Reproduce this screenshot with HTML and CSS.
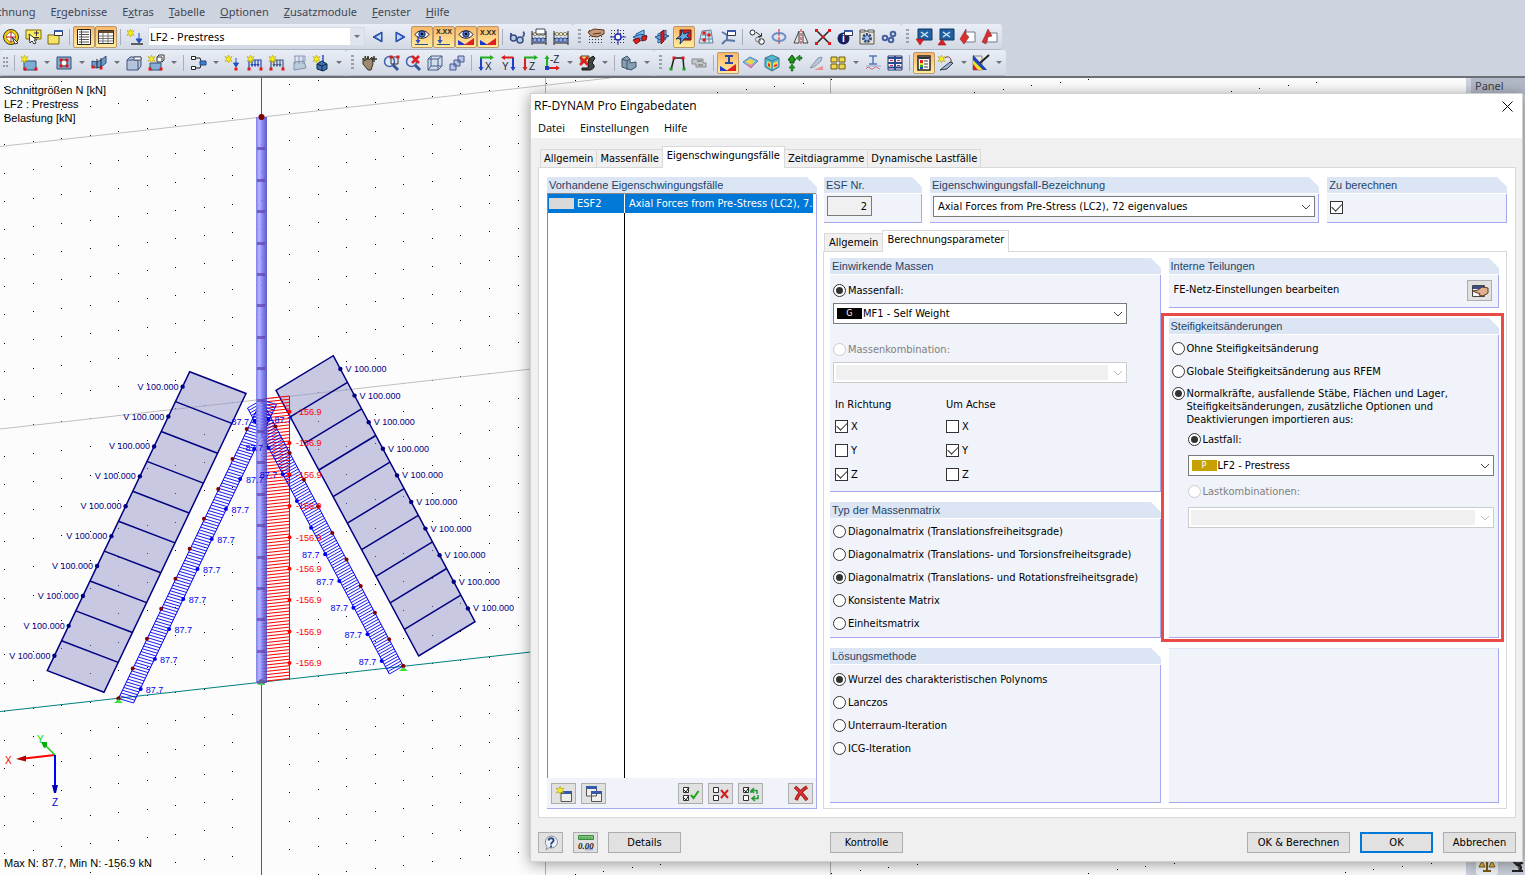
FILE: index.html
```html
<!DOCTYPE html>
<html lang="de">
<head>
<meta charset="utf-8">
<title>RF-DYNAM Pro Eingabedaten</title>
<link rel="stylesheet" href="styles.css">
</head>
<body>
<div class="app">
  <nav class="menubar">
    <a href="#" class="cut">echnung</a><a href="#">E<u>r</u>gebnisse</a><a href="#">E<u>x</u>tras</a><a href="#"><u>T</u>abelle</a><a href="#"><u>O</u>ptionen</a><a href="#"><u>Z</u>usatzmodule</a><a href="#"><u>F</u>enster</a><a href="#"><u>H</u>ilfe</a>
  </nav>
  <div class="toolbar" id="bar1"></div>
  <div class="toolbar" id="bar2"></div>
  <main class="work">
    <svg class="view" id="view" role="img" aria-label="Schnittgrößen N"></svg>
    <aside class="panel">
      <h2>Panel</h2>
      <div class="panel-foot">
        <button type="button" class="ptab on" aria-label="Faktoren"><svg class="ic" viewBox="0 0 16 16"><path d="M8 2v11M2 4h12M4 14h8" stroke="#7a5c14" stroke-width="2" fill="none"/><path d="M0 10l3-6 3 6zM10 10l3-6 3 6z" fill="#e8c040" stroke="#7a5c14"/></svg></button>
        <button type="button" class="ptab" aria-label="Filter"><svg class="ic" viewBox="0 0 16 16"><path d="M4 4l6-3 3 5-5 2zM3 14h11M8 8c5 0 5 4 2 6" stroke="#222" stroke-width="2" fill="#555"/></svg></button>
      </div>
    </aside>
  </main>
</div>

<section class="dialog" role="dialog" aria-labelledby="dlg-title">
  <header class="titlebar">
    <h1 id="dlg-title">RF-DYNAM Pro Eingabedaten</h1>
    <button type="button" class="close" aria-label="Schließen"><svg viewBox="0 0 11 11"><path d="M.5.5l10 10M10.500.5l-10 10" stroke="#000" fill="none"/></svg></button>
  </header>
  <nav class="dlgmenu"><a href="#">Datei</a><a href="#">Einstellungen</a><a href="#">Hilfe</a></nav>

  <div class="dlgbody">
    <div class="tabs" role="tablist">
      <button type="button" role="tab">Allgemein</button><button type="button" role="tab">Massenfälle</button><button type="button" role="tab" class="on" aria-selected="true">Eigenschwingungsfälle</button><button type="button" role="tab">Zeitdiagramme</button><button type="button" role="tab">Dynamische Lastfälle</button>
    </div>
    <div class="page outer">
      <section class="group listgroup">
        <h3>Vorhandene Eigenschwingungsfälle</h3>
        <table class="cases">
          <tbody>
            <tr class="sel"><td><i class="swatch"></i>ESF2</td><td>Axial Forces from Pre-Stress (LC2), 7.</td></tr>
            <tr class="rest"><td></td><td></td></tr>
          </tbody>
        </table>
        <div class="listbar">
          <button type="button" class="btn sq" aria-label="Neu"><svg class="ic" viewBox="0 0 16 16"><path d="M5 6h10.500v9.500H5z" fill="#f0f0ea" stroke="#555"/><path d="M5 5h11v3H5z" fill="#3858a8"/><path d="M4 0l1 3 3-1-2 2.500 2 2.500-3-1-1 2-1-2-3 1 2-2.500L0 2l3 1z" fill="#f6ee20" stroke="#a89400" stroke-width=".5"/></svg></button>
          <button type="button" class="btn sq" aria-label="Kopieren"><svg class="ic" viewBox="0 0 16 16"><path d="M.500 1h10v9H.500zM5.500 6h10v9.500h-10z" fill="#f0f0ea" stroke="#555"/><path d="M0 0h11v3H0zM5 5h11v3H5z" fill="#3858a8"/></svg></button>
          <span class="grow"></span>
          <button type="button" class="btn sq" aria-label="Alle auswählen"><svg class="ic" viewBox="0 0 16 16"><path d="M.500 1.500h5v5h-5zM.500 9.500h5v5h-5z" fill="#fff" stroke="#333"/><path d="M1 4l2 2 3-5M1 12l2 2 3-5" stroke="#222" fill="none"/><path d="M8 9l2.500 3L15.500 5" stroke="#1da51d" stroke-width="2" fill="none"/></svg></button>
          <button type="button" class="btn sq" aria-label="Alle abwählen"><svg class="ic" viewBox="0 0 16 16"><path d="M.500 1.500h5v5h-5zM.500 9.500h5v5h-5z" fill="#fff" stroke="#333"/><path d="M8 4l7 8M15 4l-7 8" stroke="#d02020" stroke-width="2" fill="none"/></svg></button>
          <button type="button" class="btn sq" aria-label="Auswahl umkehren"><svg class="ic" viewBox="0 0 16 16"><path d="M.500 1.500h5v5h-5zM.500 9.500h5v5h-5z" fill="#fff" stroke="#333"/><path d="M1 4l2 2 3-5" stroke="#222" fill="none"/><path d="M8 7V4.500h6V8M15 9v3.500H9M11 2L8.500 4.500 11 7M12 10l-3 2.500 3 2.500" stroke="#1d9a35" stroke-width="1.500" fill="none"/></svg></button>
          <span class="pad"></span>
          <button type="button" class="btn sq" aria-label="Löschen"><svg class="ic" viewBox="0 0 16 16"><path d="M2 1c5 4 8 8 12 13M14 1C9 4 5 9 3 14" stroke="#8c1010" stroke-width="3.500" fill="none"/><path d="M2 1c5 4 8 8 12 13M14 1C9 4 5 9 3 14" stroke="#e03030" stroke-width="2" fill="none"/></svg></button>
        </div>
      </section>

      <div class="detail">
        <div class="toprow">
          <section class="group"><h3><label for="esf">ESF Nr.</label></h3><div class="gb"><input id="esf" class="num" type="text" value="2" readonly></div></section>
          <section class="group"><h3><label for="bez">Eigenschwingungsfall-Bezeichnung</label></h3><div class="gb bez"><div class="combo"><select id="bez"><option>Axial Forces from Pre-Stress (LC2), 72 eigenvalues</option></select><svg class="chev" viewBox="0 0 10 6"><path d="M1 1l4 4 4-4" fill="none" stroke="#444"/></svg></div></div></section>
          <section class="group"><h3><label for="calc">Zu berechnen</label></h3><div class="gb calc"><input type="checkbox" id="calc" checked></div></section>
        </div>

        <div class="tabs inner" role="tablist">
          <button type="button" role="tab">Allgemein</button><button type="button" role="tab" class="on" aria-selected="true">Berechnungsparameter</button>
        </div>
        <div class="page params">
          <div class="stack">
            <section class="group">
              <h3>Einwirkende Massen</h3>
              <div class="gb masses">
                <label class="opt"><input type="radio" name="mass" checked>Massenfall:</label>
                <div class="combo"><span class="badge g">G</span><select aria-label="Massenfall"><option>MF1 - Self Weight</option></select><svg class="chev" viewBox="0 0 10 6"><path d="M1 1l4 4 4-4" fill="none" stroke="#444"/></svg></div>
                <label class="opt off mk"><input type="radio" name="mass" disabled>Massenkombination:</label>
                <div class="combo off"><select aria-label="Massenkombination" disabled></select><svg class="chev" viewBox="0 0 10 6"><path d="M1 1l4 4 4-4" fill="none" stroke="#bbb"/></svg></div>
                <div class="axes">
                  <fieldset><legend>In Richtung</legend>
                    <label><input type="checkbox" checked>X</label><label><input type="checkbox">Y</label><label><input type="checkbox" checked>Z</label>
                  </fieldset>
                  <fieldset><legend>Um Achse</legend>
                    <label><input type="checkbox">X</label><label><input type="checkbox" checked>Y</label><label><input type="checkbox">Z</label>
                  </fieldset>
                </div>
              </div>
            </section>
            <section class="group">
              <h3>Typ der Massenmatrix</h3>
              <div class="gb matrix">
                <label class="opt"><input type="radio" name="mx">Diagonalmatrix (Translationsfreiheitsgrade)</label>
                <label class="opt"><input type="radio" name="mx">Diagonalmatrix (Translations- und Torsionsfreiheitsgrade)</label>
                <label class="opt"><input type="radio" name="mx" checked>Diagonalmatrix (Translations- und Rotationsfreiheitsgrade)</label>
                <label class="opt"><input type="radio" name="mx">Konsistente Matrix</label>
                <label class="opt"><input type="radio" name="mx">Einheitsmatrix</label>
              </div>
            </section>
          </div>
          <div class="stack">
            <section class="group">
              <h3>Interne Teilungen</h3>
              <div class="gb mesh"><span>FE-Netz-Einstellungen bearbeiten</span>
                <button type="button" class="btn sq" aria-label="FE-Netz-Einstellungen bearbeiten"><svg class="ic" viewBox="0 0 16 16"><path d="M.500 2.500h12v11H.500z" fill="#fafafa" stroke="#444"/><path d="M1 3h12v3H1z" fill="#35508c"/><path d="M1 8l5-1 4-3 6 1v5l-5 3-4-1 1-1.500-4-1z" fill="#e0b090" stroke="#5a3820"/></svg></button></div>
            </section>
            <section class="group fill marked">
              <h3>Steifigkeitsänderungen</h3>
              <div class="gb stiff">
                <label class="opt"><input type="radio" name="st">Ohne Steifigkeitsänderung</label>
                <label class="opt"><input type="radio" name="st">Globale Steifigkeitsänderung aus RFEM</label>
                <label class="opt multi"><input type="radio" name="st" checked><span>Normalkräfte, ausfallende Stäbe, Flächen und Lager,<br>Steifigkeitsänderungen, zusätzliche Optionen und<br>Deaktivierungen importieren aus:</span></label>
                <div class="sub">
                  <label class="opt"><input type="radio" name="lf" checked>Lastfall:</label>
                  <div class="combo"><span class="badge p">P</span><select aria-label="Lastfall"><option>LF2 - Prestress</option></select><svg class="chev" viewBox="0 0 10 6"><path d="M1 1l4 4 4-4" fill="none" stroke="#444"/></svg></div>
                  <label class="opt off"><input type="radio" name="lf" disabled>Lastkombinationen:</label>
                  <div class="combo off"><select aria-label="Lastkombinationen" disabled></select><svg class="chev" viewBox="0 0 10 6"><path d="M1 1l4 4 4-4" fill="none" stroke="#bbb"/></svg></div>
                </div>
              </div>
            </section>
          </div>
          <section class="group">
            <h3>Lösungsmethode</h3>
            <div class="gb method">
              <label class="opt"><input type="radio" name="lm" checked>Wurzel des charakteristischen Polynoms</label>
              <label class="opt"><input type="radio" name="lm">Lanczos</label>
              <label class="opt"><input type="radio" name="lm">Unterraum-Iteration</label>
              <label class="opt"><input type="radio" name="lm">ICG-Iteration</label>
            </div>
          </section>
          <section class="group blank"></section>
        </div>
      </div>
    </div>
  </div>

  <footer class="dlgfoot">
    <button type="button" class="btn sq" aria-label="Hilfe"><svg class="ic" viewBox="0 0 16 16"><path d="M8 1a6.500 6 0 1 1-2 11.700L3 15l1-3.500A6.200 6.200 0 0 1 8 1z" fill="#eef2fa" stroke="#8890a0"/><path d="M5.500 5.500C6 2.500 10.500 2.500 10.500 5.500 10.500 7.500 8 7 8 9.500M8 10.500v2" stroke="#30487c" stroke-width="2" fill="none"/></svg></button>
    <button type="button" class="btn sq units" aria-label="Einheiten"><svg class="ic" viewBox="0 0 16 16"><path d="M.500.500h15v4H.500z" fill="#7cc47c" stroke="#3c8c3c"/><path d="M3 2v3M6 2v3M9 2v3M12 2v3" stroke="#3c8c3c"/><path d="M7 13h8v2.500H7z" fill="#a8b8d8"/><text x="0" y="14" font-size="9" font-style="italic" font-weight="bold" font-family="Liberation Serif, serif" fill="#222">0.00</text></svg></button>
    <button type="button" class="btn">Details</button>
    <button type="button" class="btn kontrolle">Kontrolle</button>
    <span class="grow"></span>
    <button type="button" class="btn wide">OK &amp; Berechnen</button>
    <button type="button" class="btn primary">OK</button>
    <button type="button" class="btn">Abbrechen</button>
  </footer>
</section>
<script src="app.js"></script>
</body>
</html>
```
FILE: app.js
```javascript
/* ---------- toolbar icons ---------- */
const P = (d, f = 'none', s = 'none', w = 1) => `<path d="${d}" fill="${f}" stroke="${s}" stroke-width="${w}"/>`;
const T = (x, y, t, c = '#111', s = 8) => `<text x="${x}" y="${y}" font-size="${s}" font-weight="bold" font-family="Liberation Sans, sans-serif" fill="${c}">${t}</text>`;
const star = P('M3.500 0l1 2.500L7 1.500 5.500 4 7 6.500l-2.500-1-1 2.500-1-2.500-2.500 1L1.500 4 0 1.500l2.500 1z', '#f6ee20', '#a89400', .5);
const dot = (x, y, c = '#e01818') => P(`M${x - 1.500} ${y - 1.500}h3v3h-3z`, c);
const lens = P('M10 10l5 5', 'none', '#38549c', 3) + '<circle cx="6.500" cy="6.500" r="5" fill="#dce8fa" stroke="#4060a8" stroke-width="1.500"/>';
const eye = P('M1 5.500c3-5 11-5 14 0-3 5-11 5-14 0z', '#fff', '#222') + '<circle cx="8" cy="5" r="3.200" fill="#4c78d0" stroke="#142860"/><circle cx="8" cy="5" r="1.300" fill="#000"/>';
const ramp = P('M0 16v-5l8 5z', '#2038d0') + P('M16 9v7H6z', '#e02020');
const cube = (c = '#a8c0e0') => P('M1 5l3-3h11v9l-3 4H1z', c, '#3c5484') + P('M1 5h11v10M12 5l3-3', 'none', '#3c5484');
const load = P('M2 15V5h12v10M5 5v6M8 5v6M11 5v6M4 9l1 2 1-2M7 9l1 2 1-2M10 9l1 2 1-2', 'none', '#2848b0', 1.2) + dot(2, 14) + dot(14, 14);
const grid = P('M1 1.500h15M1 4.500h15M1 7.500h15M1 10.500h15M1 13.500h15', 'none', '#333').replace('/>', ' stroke-dasharray="1 2"/>');
const planes = P('M4 5l8-4v9l-8 4z', '#8cc8f0', '#185898') + P('M1 8l8-3 6 2-9 4z', '#68a8e0', '#185898');
const beads = P('M1 2v14M15 2v14M1 5h14M1 9.500h14M1 14h14', 'none', '#222') + [4, 8, 12].map(x => `<circle cx="${x}" cy="5" r="1.700" fill="#f0e8a0" stroke="#555" stroke-width=".6"/><circle cx="${x}" cy="11" r="2.200" fill="#90a8e0" stroke="#283c80" stroke-width=".8"/>`).join('');
const win = P('M7.500 1.500h8v5h-8z', '#fff', '#334') + P('M7 1h9v2H7z', '#3858a8');
const blocks = c => P('M1 2h6v5H1zM9 2h6v5H9zM1 9h6v5H1zM9 9h6v5H9z', c, '#6a5a10');
const screen = P('M2 0h14v11H2z', '#2060a0', '#103868') + P('M5 3l7 5M12 3L5 8', 'none', '#d0e4f8', 1.5);
const axes = (x1, c1, x2, c2, l) => P(`M${x1} 15V2`, 'none', c1, 2) + P('M2 2.500h12', 'none', c2, 2) + P(`M${x1 - 2.500} 12h5l-2.500 4z`, c1) + P(x2, c2) + `<text x="7" y="15" font-size="10" font-family="Liberation Sans, sans-serif" fill="#223">${l}</text>`;
const I = {
  target: '<circle cx="8" cy="8" r="6" fill="#fff" stroke="#f0d000" stroke-width="3"/><circle cx="8" cy="8" r="7.500" fill="none" stroke="#333"/><circle cx="8" cy="8" r="4.500" fill="none" stroke="#666" stroke-width=".7"/>' + P('M8 2v12M3 8h10', 'none', '#d02020', 1) + P('M9 8l6 6-3 1z', '#fff', '#333'),
  pick: P('M1 1h15v9H1z', '#f8ec60', '#806c00') + P('M4 5l1 9 2-2 2 3 2-1-2-3h3z', '#fff', '#333') + P('M9 4h5M11.500 2v5M9 8.500h5', 'none', '#333'),
  folder: P('M1 6h11v9H1z', '#f4e468', '#7c6c10') + win,
  list: P('M1.500.500h13v15h-13z', '#fff', '#222') + P('M3 3h10M3 5.500h10M3 8h10M3 10.500h10M3 13h10M5.500 1v14', 'none', '#555'),
  table: P('M.500 1.500h15v13H.500z', '#fff', '#333') + P('M1 2h14v2H1z', '#6a4a28') + P('M1 7h14M1 9.500h14M1 12h14M5 4v10M10 4v10', 'none', '#777'),
  newload: star + P('M4 15h12', 'none', '#333', 1.5) + P('M12 4v8M12 14l-3-4h6z', '#2850c0', '#2850c0', 1),
  prev: P('M12 3v10L3 8z', '#3868d8', '#1c3c98') + P('M11 5v6L6 8z', '#c8dcff'), next: P('M4 3v10l9-5z', '#3868d8', '#1c3c98') + P('M5 5v6l5-3z', '#c8dcff'),
  eyeload: eye + P('M4 7v5', 'none', '#2850c0', 1.5) + P('M1.500 11l2.500 4 2.500-4z', '#2850c0') + P('M1 15.500h13', 'none', '#2c4c90'), xxload: T(0, 5, 'X.XX', '#222', 7) + P('M4 7v5', 'none', '#2850c0', 1.5) + P('M1.500 11l2.500 4 2.500-4z', '#2850c0') + P('M1 15.500h13', 'none', '#2c4c90'),
  eyeramp: eye + ramp, xxramp: T(0, 6, 'X.XX', '#222', 7) + ramp,
  glasses: P('M2 4v4M14 3c2 1 1 3 0 5', 'none', '#445c98', 2) + '<circle cx="4.500" cy="9" r="3" fill="#b8cce8" stroke="#384c80" stroke-width="1.500"/><circle cx="11" cy="11" r="3" fill="#b8cce8" stroke="#384c80" stroke-width="1.500"/>',
  abacusw: beads + P('M5 0h9v5H5z', '#fff', '#445'), abacus: beads,
  handgrid: grid + P('M0 3l6-3 10 1v4L9 8 3 7z', '#c89878', '#5a3820') + P('M5 5l8-1', 'none', '#5a3820'), gridpt: grid + '<circle cx="8" cy="8" r="3" fill="#fff" stroke="#2030b0" stroke-width="1.500"/>' + P('M8 0v5M8 11v5M0 8h5M11 8h5', 'none', '#2030b0'),
  plane1: planes + P('M1 11l6-2 1 3-4 3z', '#e02020', '#801010') + P('M10 7h5l-1 4-4 1z', '#e02020', '#801010'), plane2: planes + P('M7 3l3-2v11l-3 3z', '#e02020', '#801010'), plane3: P('M4 1h11v10H4z', '#e02020', '#601010') + P('M6 1l2 4 5-2-2 4 3 3-5-1-5 6 1-6-5 1 5-4z', '#68a8e0', '#103868'),
  meshpt: P('M4 2l9-1 2 13H1zM4 6h10M2 10h12M8 2L7 14M11 2v12', '#d4ecf8', '#68809c') + dot(6, 4) + dot(11, 6) + dot(6, 11), linkwin: P('M2 3l5 3v5l8 1M2 15l4-4', 'none', '#5878a8', 2) + win,
  circlecopy: '<circle cx="3.500" cy="3.500" r="2.500" fill="#fff" stroke="#222"/><circle cx="12.500" cy="12.500" r="2.800" fill="#fff" stroke="#222"/><circle cx="9" cy="10.500" r="2.500" fill="none" stroke="#777"/>' + P('M7 3l5 4M12.500 4v3.500H9', 'none', '#333'),
  rotate: '<ellipse cx="8" cy="8" rx="6.500" ry="4" fill="none" stroke="#7090c8" stroke-width="2"/>' + P('M8 0v16', 'none', '#d02020').replace('/>', ' stroke-dasharray="3 1"/>'),
  mirror: P('M6 2v12H1zM10 2v12h5z', '#e8e8e8', '#444') + P('M8 0v16', 'none', '#d02020').replace('/>', ' stroke-dasharray="3 1"/>'),
  cross: P('M2 2l12 12M14 2L2 14', 'none', '#222', 1.5) + dot(1.500, 1.500) + dot(14.500, 1.500) + dot(1.500, 14.500) + dot(14.500, 14.500) + dot(8, 8),
  info: '<circle cx="6.500" cy="9.500" r="6" fill="#182060"/>' + T(5, 13, 'i', '#fff', 10) + win, gearwin: P('M1 2h14v13H1z', '#e8e4d0', '#555') + P('M1 1h5v2H1zM9 1h6v2H9z', '#fff', '#555') + '<circle cx="8" cy="9" r="3.500" fill="#a8c0e8" stroke="#304880" stroke-width="3" stroke-dasharray="2 1"/>',
  gears: [[4, 9], [10, 11], [12, 5]].map(([x, y]) => `<circle cx="${x}" cy="${y}" r="2.300" fill="#d4e0f4" stroke="#4860a0" stroke-width="2"/>`).join(''),
  scrdn: screen + P('M0 10h8l-4 6z', '#e02020', '#801010', .5), scrup: screen + P('M0 16h8l-4-6z', '#e02020', '#801010', .5),
  boxdn: P('M5 3h10v10H5z', '#fff', '#778') + P('M6 0v5l3 3-5 7-4-5 3-5z', '#d83030', '#801818', .5), boxup: P('M5 4h10v9H5z', '#fff', '#778') + P('M6 0l4 7-4 1-2 7-4-2 3-6z', '#d83030', '#801818', .5),
  dots: P('M1 2v12M4 2v12', 'none', '#555').replace('/>', ' stroke-dasharray="2 2"/>'),
  surf: P('M3 6h12v9H3z', '#7cacd8', '#305078') + star + dot(15, 14) + dot(4, 14), opening: P('M1 2h14v12H1z', '#84b0d8', '#305078') + P('M5 5h6v6H5z', '#fff', '#223') + dot(5, 5) + dot(11, 5) + dot(5, 11) + dot(11, 11),
  bent: P('M1 6l5 1 4-2 5-4v7l-5 4-4 1-5-1z', '#6c9ccc', '#305078') + dot(2, 12) + dot(10, 13) + P('M6 4v9M10 3v9', 'none', '#223'), solid: cube('#b4c4dc') + P('M8 2h7v3H8z', '#fff', '#556'), newsolid: P('M2 8h11v7H2z', '#84b0d8', '#305078') + P('M9 2h5v5H9zM9 2l2-2h5v5l-2 2', '#fff', '#333') + star + dot(13, 14) + dot(2, 14),
  nodes: P('M1.500 1.500h4v3h-4zM1.500 11.500h4v3h-4z', '#fff', '#222') + P('M6 3h4l1 3M6 13h4l1-3', 'none', '#222') + P('M10 6h6v4h-6z', '#3c80d0', '#204880'),
  nodeload: star + P('M11 3v7M8.500 8l2.500 4 2.500-4z', '#2850c0', '#2850c0') + dot(11, 14), memload: load + star, lineload: load.replaceAll('#2848b0', '#405880') + star, surfload: P('M3 7l10-1 2 7-12 2z', '#b8ccdc', '#8090a8') + P('M4 1v8M8 1v8M12 1v8M3 1h11v5', 'none', '#8898b8'), solidload: star + P('M10 0v7', 'none', '#2850c0', 1.5) + P('M4 9l5-3 5 3v5l-4 2-6-2z', '#3c70b0', '#102848') + P('M4 9l5 2 5-2M9 11v5', 'none', '#102848'),
  handmove: P('M2 3l2 3V1l2 4 1-4 1 4 3-3 1 7-2 6H7L2 9z', '#a08870', '#332') + P('M13 1v6M10 4h6', 'none', '#333', 1.5), zoomwin: lens + P('M8 2h7v7H8z', 'none', '#333') + dot(8, 2) + dot(15, 2), zoomx: lens + P('M7 1l7 7M14 1L7 8', 'none', '#e02020', 2.5),
  wire: P('M1 4h10v11H1zM4 1h11v10H4zM1 4l3-3M11 4l4-3M11 15l4-4M1 15l3-4', '#c8d8ec', '#485c88').replace('<path', '<path fill-opacity=".5"'), boxes: P('M9 1h6v6H9zM5 5h6v6H5zM1 9h6v6H1z', '#b8c4e8', '#485890'),
  ax: axes(3, '#2040c8', 'M12 0l4 2.500L12 5z', '#20b020', 'X'), ay: P('M13 15V2', 'none', '#2040c8', 2) + P('M13 2.500H3', 'none', '#d82020', 2) + P('M5 0L1 2.500 5 5z', '#d82020') + P('M10.500 12h5L13 16z', '#2040c8') + '<text x="2" y="15" font-size="10" font-family="Liberation Sans, sans-serif" fill="#223">Y</text>',
  az: axes(3, '#d82020', 'M12 0l4 2.500L12 5z', '#20b020', 'Z'), amz: P('M3 2v11', 'none', '#20b020', 2) + P('M.500 4L3 0l2.500 4z', '#20b020') + P('M3 13h11', 'none', '#d82020', 2) + P('M12 10.500l4 2.500-4 2.500z', '#d82020') + P('M1 11h4v4H1z', '#2040c8') + '<text x="6" y="8" font-size="10" font-family="Liberation Sans, sans-serif" fill="#223">-Z</text>',
  viewx: P('M2 1h8v6H2z', '#f4e468', '#443') + P('M10 4l4-3 2 2-3 5c4 3 2 6-2 7H3v-2h6z', '#444', '#111') + P('M1 2l8 8M9 2l-8 8', 'none', '#e02020', 2.500), solidv: P('M1 4l5-3 3 3v4l6-1v5l-5 3-9-3z', '#88a0b4', '#3c5468') + P('M1 4l5 2v9M6 6l3-2', 'none', '#3c5468'),
  frame: P('M2 15L5 3h9l1 12', 'none', '#222', 1.5) + dot(5, 3) + dot(14, 3) + dot(2, 14, '#18a018') + dot(15, 14, '#18a018'), tag: P('M1 4h11v4h3v4H5V9H1z', '#c4c8cc', '#888') + P('M6 6h5M7 10h5', 'none', '#666'),
  iramp: P('M5 1h8M5 8h8M9 1v7', 'none', '#2848a0', 2) + ramp, diamond: P('M1 7l7-5 8 4-7 7z', '#60c8e8', '#6878c0') + P('M3 7l5-3 5 2-4 4z', '#f4d048') + P('M3 9l6 4 5-5-5 2z', '#e87ca8'), isocube: P('M1 3l7-3 7 3v9l-7 4-7-4z', '#50b8d0', '#487890') + P('M3 6l5 2v6l-5-3zM9 8l5-2v5l-5 3z', '#f0d848') + P('M4 8l2 1v3l-2-1zM10 10l3-1v2l-3 1z', '#e03030') + P('M1 3l7 3 7-3M8 6v10', 'none', '#487890'),
  support: P('M6 0l4 5H8v3H4V5H2z', '#18a018', '#084808') + P('M10 3l4-3v2h2v2h-2v2zM6 9l3 4H7v3H5v-3H3z', '#18a018', '#084808', .5), blade: P('M2 13L10 3l4-1-1 4-7 6z', '#b8c8d8', '#8898a8') + P('M6 15l9-4v4z', '#e89090'), yblocks: blocks('#f0d84c'),
  isec: P('M4 1h8M8 1v8M4 9h8', 'none', '#5878b8', 1.5) + P('M1 14c3-5 5 3 8-1 2-3 4 1 6 1', 'none', '#d86078') + P('M1 11h15', 'none', '#98a8c8'), sheets: P('M1 1h14v14H1z', '#f0f4fa', '#283860') + P('M1 3h14M1 8h14M1 12.500h14M8 1v14', 'none', '#284890', 2) + P('M3 5.500h3M10 5.500h3M3 10.500h3M10 10.500h3', 'none', '#d03030'),
  legend: P('M2 1h12v14H2z', '#fff', '#222', 1.5) + P('M3 2h10v2H3z', '#333') + P('M4 5h3v3H4z', '#e02020') + P('M4 8h3v2H4z', '#e8e020') + P('M4 10h3v2H4z', '#20b020') + P('M4 12h3v2H4z', '#2040d0') + P('M8 6h4M8 9h4M8 12h4', 'none', '#333'),
  wand: P('M2 15l10-8 3 1-6 6z', '#98b0c8', '#304058') + P('M7 3c3-3 7 0 6 5', 'none', '#6c3030') + star, colors: P('M0 1h9v14H0z', '#e8e8e8', '#888') + P('M0 0l14 15h-7L0 8z', '#18a028') + P('M0 0v5l10 10h4z', '#2040c0') + P('M0 1v4l10 10h-4L0 9z', '#f0e020') + P('M0 9v6h5z', '#d82020') + P('M7 8L16 0', 'none', '#222', 2),
};

/* '*' marks a pressed button, '|' a separator, ']' the end of a bar, 'v' a drop-down arrow */
const bars = {
  bar1: 'target pick folder | list* table* | newload COMBO prev next eyeload* xxload* eyeramp* xxramp* | glasses abacusw abacus ] handgrid gridpt plane1 plane2 plane3* meshpt linkwin | circlecopy rotate mirror cross info gearwin gears ] scrdn scrup boxdn boxup',
  bar2: 'dots | surf v opening v bent v solid newsolid v | nodes v nodeload memload lineload surfload solidload v ] handmove zoomwin zoomx wire boxes | ax ay az amz v viewx v | solidv v ] frame tag | iramp* diamond isocube support blade yblocks v isec sheets | legend* wand v colors v',
};
for (const [id, spec] of Object.entries(bars)) {
  document.getElementById(id).innerHTML = spec.split(' ] ').map((seg, n) =>
    `<div class="seg">${n ? '<i class="grip"></i>' : ''}` + seg.split(' ').map(k => {
      if (k === '|') return '<i class="sep"></i>';
      if (k === 'v') return '<button type="button" class="arrow" aria-label="Mehr"></button>';
      if (k === 'COMBO') return '<span class="lfbox"><select aria-label="Lastfall"><option>LF2 - Prestress</option></select><i></i></span>';
      const name = k.replace('*', '');
      return `<button type="button" class="tb${k.endsWith('*') ? ' on' : ''}${name === 'dots' ? ' slim' : ''}" aria-label="${name}"><svg class="ic" viewBox="0 0 16 16">${I[name]}</svg></button>`;
    }).join('') + '</div>').join('');
}

/* ---------- model view ---------- */
const line = (x1, y1, x2, y2, c, w = 1) => `<line x1="${x1}" y1="${y1}" x2="${x2}" y2="${y2}" stroke="${c}" stroke-width="${w}"/>`;
const mark = (x, y, c, r = 2) => `<circle cx="${x}" cy="${y}" r="${r}" fill="${c}"/>`;
let labels = '';
const label = (x, y, t, c, end) => { labels += `<text x="${x}" y="${y}" fill="${c}" class="val"${end ? ' text-anchor="end"' : ''}>${t}</text>`; };
let s = '<defs><linearGradient id="mast"><stop offset="0" stop-color="#6c6ce4"/><stop offset=".3" stop-color="#a8a8ff"/><stop offset=".6" stop-color="#7070f0"/><stop offset="1" stop-color="#4040c0"/></linearGradient></defs><g transform="translate(0,-78)">';
for (let i = 0; i < 54; i++) for (let j = -26; j < 14; j++) {
  const x = Math.round(4 + 28.53 * i), y = Math.round(739.500 - 3.210 * i + 28.350 * j);
  if (y > 78 && y < 876) s += `<rect x="${x}" y="${y}" width="1" height="1" fill="#000"/>`;
}
s += line(0, 146.500, 610, 78, '#c0c0c0') + line(0, 429, 540, 368, '#c0c0c0') + line(0, 711.500, 540, 651, '#008080');
s += line(545.500, 78, 545.500, 875, '#b4b4b4') + line(830.500, 78, 830.500, 875, '#b4b4b4') + line(261.500, 78, 261.500, 116, '#008080') + line(261.500, 682, 261.500, 875, '#008080');

// load blocks: four corners, ten equal fields
const block = (tl, tr, br, bl, left) => {
  s += `<path d="M${tl}L${tr} ${br} ${bl}z" fill="#9090c8" fill-opacity=".48" stroke="#000080" stroke-width="1.500"/>`;
  for (let k = 0; k < 10; k++) {
    const at = (a, b, t) => [a[0] + (b[0] - a[0]) * t, a[1] + (b[1] - a[1]) * t];
    const p = at(tl, bl, k / 10), q = at(tr, br, k / 10), m = left ? at(tl, bl, k / 10 + .05) : at(tr, br, k / 10 + .05);
    if (k) s += line(...p, ...q, '#000080', 1.5);
    s += mark(...m, '#000080', 2.2);
    if (left) label(m[0] - 4, m[1] + 3, 'V 100.000', '#000080', 1);
    else label(m[0] + 5, m[1] + 3, 'V 100.000', '#000080');
  }
};
block([189.700, 371.700], [246, 393.500], [104, 692.300], [47.300, 670.700], true);
block([276, 390.300], [333.300, 355.700], [475, 621.700], [418.700, 656], false);

// compression in the mast
for (let k = 0; k <= 88; k++) s += line(262, 399 + k * 3.210, 289.500, 396 + k * 3.210, '#f00');
s += line(289.500, 396, 289.500, 680, '#f00');

// tension in the stays
const stay = (x1, y1, x2, y2, dx, dy) => {
  const n = 108;
  for (let k = 0; k <= n; k++) {
    const x = x1 + (x2 - x1) * k / n, y = y1 + (y2 - y1) * k / n;
    s += line(x, y, x + dx, y + dy, '#0000f0', .9);
  }
  s += line(x1, y1, x2, y2, '#0000f0') + line(x1 + dx, y1 + dy, x2 + dx, y2 + dy, '#0000f0');
};
stay(261.500, 400, 118.500, 698.500, 15, 4.500);
stay(261.500, 400, 403.300, 666, -14, 8);
for (let k = 0; k < 10; k++) {
  s += mark(246.700 - 14.250 * k, 429 + 29.950 * k, '#800000') + mark(268.500 - 14.200 * k, 419 + 30 * k, '#0000f0');
  s += mark(275.500 + 14.200 * k, 426.500 + 26.600 * k, '#800000') + mark(254.500 + 14.130 * k, 421 + 26.670 * k, '#0000f0');
  if (k !== 1) label(274.500 - 14.300 * k, 422.500 + 30 * k, '87.7', '#0000f0');
  if (k < 3 || k > 4) label(249 + 14.130 * k, 424.500 + 26.670 * k, '87.7', '#0000f0', 1);
}
for (let k = 0; k < 9; k++) { s += mark(289.500, 411.700 + 31.400 * k, '#f00'); label(296, 415 + 31.400 * k, '-156.9', '#f00'); }

s += '<rect x="256" y="117" width="11" height="566" fill="url(#mast)" fill-opacity=".85"/>';
for (let k = 1; k < 19; k++) s += `<rect x="257" y="${Math.round(116 + 31.400 * k)}" width="8" height="3" fill="#6040a8" fill-opacity=".7"/>`;
s += mark(261.500, 117, '#800000', 3) + mark(261.500, 682, '#6060a0', 3);
s += mark(118.500, 698.500, '#800000') + mark(403.300, 666, '#800000') + ['M114 703l4.500-4 4.500 4z', 'M399 671l4.500-4 4.500 4z', 'M257 685l4.500-2 4.500 2z'].map(d => P(d, '#40e040')).join('');
s += labels;

// axis tripod
s += line(55, 755, 24, 758.500, '#f00', 2) + P('M16 759l10-3.500v6z', '#b00000') + line(55, 755, 47, 747, '#00d000', 1.5) + P('M41 742h6v5l-3 1z', '#00b000') + line(55, 755, 55, 786, '#00f', 2) + P('M52 785h6l-2 8h-2z', '#0000b0');
s += '<g class="axis"><text x="5" y="764" fill="#f00">X</text><text x="37" y="743" fill="#0d0">Y</text><text x="52" y="806" fill="#00c">Z</text></g>';
s += '<g class="cap"><text x="4" y="94">Schnittgrößen N [kN]</text><text x="4" y="108">LF2 : Prestress</text><text x="4" y="122">Belastung [kN]</text><text x="4" y="867">Max N: 87.7, Min N: -156.9 kN</text></g></g>';
document.getElementById('view').innerHTML = s;
```
FILE: styles.css
```css
* { box-sizing: border-box; }
html, body { height: 100%; }
body {
  margin: 0;
  overflow: hidden;
  font: 11px/13px "DejaVu Sans Condensed", "DejaVu Sans", sans-serif;
  color: #000;
}
button, input, select { font: inherit; color: inherit; margin: 0; }
a { color: inherit; text-decoration: none; }
h1, h2, h3 { margin: 0; font-weight: normal; }
.ic { width: 16px; height: 16px; display: block; overflow: visible; }
.grow { flex: 1; }

/* main window */
.app { height: 100%; display: flex; flex-direction: column; background: #ced4df; }
.menubar {
  height: 24px;
  display: flex;
  align-items: center;
  gap: 15px;
  font: 11px/16px "Noto Sans", sans-serif;
  color: #3f4654;
  white-space: nowrap;
}
.menubar .cut { margin-left: -10px; }
.toolbar { display: flex; height: 26px; }
.seg {
  display: flex;
  align-items: center;
  padding-right: 1px;
  border-radius: 3px;
  background: linear-gradient(#e8edf6, #d3d9e4);
  border-bottom: 1px solid #aeb5c2;
}
.tb, .arrow {
  width: 22px;
  height: 22px;
  padding: 0 2px;
  border: 1px solid transparent;
  background: none;
  flex: none;
}
.tb.slim { width: 11px; }
.tb.on { border-color: #b8986c; background: linear-gradient(#fbb868, #ffd184 50%, #ffec9c); border-radius: 2px; }
.arrow { width: 13px; padding: 0; display: grid; place-items: center; }
.arrow::before, .lfbox i::before {
  content: "";
  border: 3px solid transparent;
  border-top-color: #6c7078;
  border-bottom: 0;
}
.sep { width: 1px; height: 16px; margin: 0 3px; background: #a8aeba; }
.grip { width: 3px; height: 16px; margin: 0 4px 0 5px; background: repeating-linear-gradient(#9aa1ae 0 2px, transparent 2px 4px); }
.lfbox { display: flex; width: 217px; height: 19px; margin: 0 2px; background: #fff; border: 1px solid #d4dae6; }
.lfbox select { flex: 1; appearance: none; border: 0; padding: 0 1px; background: #fff; font: 11px/16px "Noto Sans", sans-serif; }
.lfbox i { width: 14px; display: grid; place-items: center; background: #dfe4ed; }

.work { flex: 1; display: flex; min-height: 0; gap: 5px; border-top: 2px solid #6c6f74; }
.view { flex: 1; min-width: 0; height: 100%; background: #fcfcfc; overflow: hidden; display: block; }
.view .val { font: 9px "Liberation Sans", Arial, sans-serif; }
.view .cap { font: 11px "Liberation Sans", Arial, sans-serif; }
.view .axis { font: 10px "Liberation Sans", Arial, sans-serif; }
.panel { width: 54px; display: flex; flex-direction: column; justify-content: space-between; background: #c9ced9; }
.panel h2 { height: 17px; padding: 0 4px; font: 11px/16px "Noto Sans", sans-serif; color: #3a4048; background: #b2b9c7; }
.panel-foot { display: flex; gap: 8px; padding: 0 5px; align-items: flex-end; height: 20px; }
.ptab { width: 22px; height: 20px; padding: 2px 3px; border: 0; background: none; }
.ptab.on { background: #eef2f6; border-radius: 3px; }

/* dialog */
.dialog {
  position: absolute;
  inset: 93px 2px 13px 530px;
  display: flex;
  flex-direction: column;
  background: #f0f0f0;
  border: 1px solid #d0d0d0;
  box-shadow: 0 2px 14px rgba(0, 0, 0, .4);
}
.titlebar { display: flex; justify-content: space-between; align-items: center; height: 24px; padding: 0 8px 0 3px; background: #fff; }
.titlebar h1 { font: 12px/18px "Open Sans", sans-serif; }
.close { width: 13px; height: 13px; padding: 1px; border: 0; background: none; }
.close svg { width: 11px; height: 11px; display: block; }
.dlgmenu { display: flex; align-items: center; gap: 15px; height: 20px; padding: 0 7px 1px; background: #fff; font: 11px/16px "Open Sans", sans-serif; }
.dlgbody { flex: 1; min-height: 0; display: flex; flex-direction: column; padding: 8px 6px 0 7px; }

.tabs { display: flex; align-items: flex-end; padding-left: 2px; height: 21px; position: relative; }
.tabs button {
  height: 18px;
  margin-right: -1px;
  padding: 0 3px;
  border: 1px solid #d9d9d9;
  border-bottom: 0;
  background: #f0f0f0;
  white-space: nowrap;
}
.tabs .on { height: 22px; padding: 0 4px 4px; background: #fff; margin-bottom: -1px; z-index: 1; }
.tabs.inner button { padding-left: 4px; padding-right: 4px; }
.page { flex: 1; min-height: 0; background: #fff; border: 1px solid #d9d9d9; }
.outer { display: grid; grid-template-columns: 270px 1fr; gap: 6px; padding: 9px 8px 8px; }

.group { display: flex; flex-direction: column; background: #f0f3f9; border: solid #a8a8ee; border-width: 0 1px 1px 0; position: relative; min-width: 0; }
.group h3 {
  height: 17px;
  margin-right: -1px;
  padding: 0 2px;
  font: 11px/16px "Liberation Sans", Arial, sans-serif;
  color: #1f4468;
  background: #dce5f4;
  border-bottom: 1px solid #fff;
  white-space: nowrap;
}
.group::before {
  content: "";
  position: absolute;
  top: 0;
  right: -1px;
  border: 5px solid #fff;
  border-left-color: transparent;
  border-bottom-color: transparent;
}
.gb { padding: 0 3px; }

.listgroup { min-height: 0; }
.cases {
  flex: 1;
  width: 100%;
  margin-top: -1px;
  display: grid;
  grid-template-rows: 19px 1fr;
  background: #fff;
  border: solid #888;
  border-width: 1px 0 0 1px;
}
.cases tbody { display: contents; }
.cases tr { display: grid; grid-template-columns: 77px 1fr; }
.cases td { padding: 0 4px; white-space: nowrap; overflow: hidden; line-height: 19px; }
.cases td:first-child { border-right: 1px solid #000; padding-left: 1px; display: flex; gap: 3px; }
.cases .sel { background: #0078d7; color: #fff; margin-right: 3px; }
.cases .sel td:first-child { border-right-color: #fff; }
.swatch { width: 25px; height: 11px; margin-top: 4px; background: #d9d9d9; }
.listbar { display: flex; gap: 5px; padding: 5px 3px 4px 4px; }
.listbar .pad { width: 15px; }

.btn { height: 21px; min-width: 73px; padding: 0; background: #e1e1e1; border: 1px solid #adadad; }
.btn.sq { min-width: 0; width: 25px; display: grid; place-items: center; flex: none; }
.btn.wide { min-width: 103px; }
.btn.primary { border: 2px solid #0078d7; }
.dlgfoot { display: flex; gap: 10px; padding: 14px 6px 8px 7px; }
.dlgfoot .kontrolle { margin-left: 139px; }

.detail { display: flex; flex-direction: column; min-height: 0; min-width: 0; }
.toprow { display: grid; grid-template-columns: 98px 13fr 6fr; gap: 8px; padding-left: 1px; margin-bottom: 7px; }
.toprow .group { height: 46px; }
.num { width: 45px; height: 20px; margin-top: 2px; padding: 0 4px; text-align: right; background: #f0f0f0; border: 1px solid #7a7a7a; }
.bez { padding-top: 2px; }
.calc { padding-top: 7px; }
.inner { padding-left: 1px; }
.params { display: grid; grid-template-columns: 1fr 1fr; grid-template-rows: auto 1fr; gap: 10px 8px; padding: 6px 7px 5px 6px; }
.stack { display: flex; flex-direction: column; gap: 10px; min-width: 0; }
.fill { flex: 1; }
.blank { border-top: 1px solid #dce5f4; }
.blank::before { content: none; }

.combo { display: flex; align-items: center; height: 21px; background: #fff; border: 1px solid #7a7a7a; }
.combo select { flex: 1; min-width: 0; height: 15px; appearance: none; border: 0; background: none; padding: 0 4px; line-height: 15px; }
.combo .chev { width: 10px; height: 6px; margin: 0 3px 0 5px; }
.combo.off { border-color: #ccc; }
.combo.off select { margin-left: 2px; background: #f0f0f0; opacity: 1; }
.badge { width: 25px; height: 11px; margin-left: 3px; font-size: 9px; line-height: 11px; text-align: center; color: #fff; }
.badge + select { padding-left: 1px; }
.g { background: #000; }
.p { background: #c8a000; }

.opt { display: flex; align-items: center; height: 23px; gap: 2px; white-space: nowrap; }
.opt.off { color: #808080; }
.multi { height: auto; align-items: flex-start; margin: 4px 0 2px; }
input[type="radio"], input[type="checkbox"] {
  appearance: none;
  width: 13px;
  height: 13px;
  flex: none;
  display: grid;
  place-items: center;
  border: 1px solid #333;
  background: #fff;
}
input[type="radio"] { border-radius: 50%; }
input[type="radio"]:disabled { border-color: #ccc; }
input[type="radio"]:checked::before { content: ""; width: 7px; height: 7px; border-radius: 50%; background: #333; }
input[type="checkbox"]:checked::before {
  content: "";
  width: 9px;
  height: 5px;
  margin-bottom: 3px;
  border: solid #333;
  border-width: 0 0 1px 1px;
  transform: rotate(-45deg);
}
.masses { padding: 4px 33px 5px 3px; }
.masses .combo { margin-top: 1px; }
.mk { margin-top: 14px; }
.axes { display: grid; grid-template-columns: 111px 111px; margin-top: 13px; padding-left: 2px; }
.axes fieldset { border: 0; margin: 0; padding: 0; min-width: 0; }
.axes legend { padding: 0; line-height: 18px; }
.axes label { display: flex; align-items: center; gap: 3px; height: 24px; }
.matrix { padding-top: 1px; padding-bottom: 2px; }
.method { padding-top: 3px; }
.mesh { display: flex; justify-content: space-between; align-items: flex-start; padding: 5px 6px 6px 5px; }
.mesh span { line-height: 20px; }
.stiff { padding-top: 2px; }
.sub { padding: 0 1px 0 16px; display: grid; grid-template-rows: 23px 21px 23px 21px; gap: 4px; }
.marked::after {
  content: "";
  position: absolute;
  inset: -5px -6px -5px -8px;
  border: 3px solid #ea4b46;
  pointer-events: none;
}
```
